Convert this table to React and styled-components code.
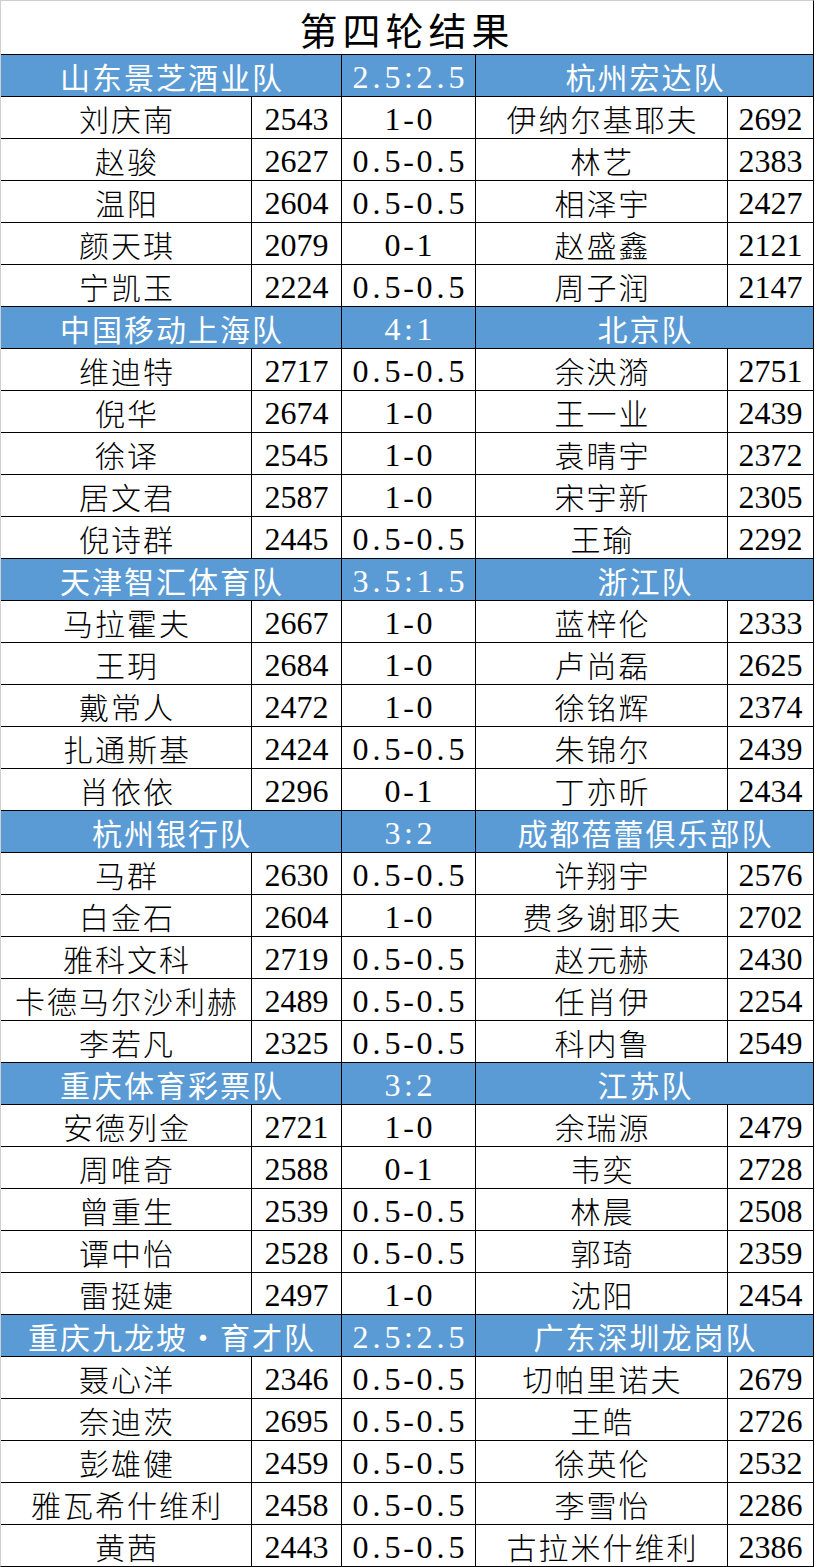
import React from "react";
import styled, { createGlobalStyle } from "styled-components";

const Global = createGlobalStyle`
  html, body { margin: 0; padding: 0; background: #fff; }
  body { font-family: "Liberation Serif", "Noto Sans CJK SC", serif; }
`;

const matches = [
  {
    home: "山东景芝酒业队", score: "2.5:2.5", away: "杭州宏达队",
    rows: [
      ["刘庆南", "2543", "1-0", "伊纳尔基耶夫", "2692"],
      ["赵骏", "2627", "0.5-0.5", "林艺", "2383"],
      ["温阳", "2604", "0.5-0.5", "相泽宇", "2427"],
      ["颜天琪", "2079", "0-1", "赵盛鑫", "2121"],
      ["宁凯玉", "2224", "0.5-0.5", "周子润", "2147"],
    ],
  },
  {
    home: "中国移动上海队", score: "4:1", away: "北京队",
    rows: [
      ["维迪特", "2717", "0.5-0.5", "余泱漪", "2751"],
      ["倪华", "2674", "1-0", "王一业", "2439"],
      ["徐译", "2545", "1-0", "袁晴宇", "2372"],
      ["居文君", "2587", "1-0", "宋宇新", "2305"],
      ["倪诗群", "2445", "0.5-0.5", "王瑜", "2292"],
    ],
  },
  {
    home: "天津智汇体育队", score: "3.5:1.5", away: "浙江队",
    rows: [
      ["马拉霍夫", "2667", "1-0", "蓝梓伦", "2333"],
      ["王玥", "2684", "1-0", "卢尚磊", "2625"],
      ["戴常人", "2472", "1-0", "徐铭辉", "2374"],
      ["扎通斯基", "2424", "0.5-0.5", "朱锦尔", "2439"],
      ["肖依依", "2296", "0-1", "丁亦昕", "2434"],
    ],
  },
  {
    home: "杭州银行队", score: "3:2", away: "成都蓓蕾俱乐部队",
    rows: [
      ["马群", "2630", "0.5-0.5", "许翔宇", "2576"],
      ["白金石", "2604", "1-0", "费多谢耶夫", "2702"],
      ["雅科文科", "2719", "0.5-0.5", "赵元赫", "2430"],
      ["卡德马尔沙利赫", "2489", "0.5-0.5", "任肖伊", "2254"],
      ["李若凡", "2325", "0.5-0.5", "科内鲁", "2549"],
    ],
  },
  {
    home: "重庆体育彩票队", score: "3:2", away: "江苏队",
    rows: [
      ["安德列金", "2721", "1-0", "余瑞源", "2479"],
      ["周唯奇", "2588", "0-1", "韦奕", "2728"],
      ["曾重生", "2539", "0.5-0.5", "林晨", "2508"],
      ["谭中怡", "2528", "0.5-0.5", "郭琦", "2359"],
      ["雷挺婕", "2497", "1-0", "沈阳", "2454"],
    ],
  },
  {
    home: "重庆九龙坡•育才队", score: "2.5:2.5", away: "广东深圳龙岗队",
    rows: [
      ["聂心洋", "2346", "0.5-0.5", "切帕里诺夫", "2679"],
      ["奈迪茨", "2695", "0.5-0.5", "王皓", "2726"],
      ["彭雄健", "2459", "0.5-0.5", "徐英伦", "2532"],
      ["雅瓦希什维利", "2458", "0.5-0.5", "李雪怡", "2286"],
      ["黄茜", "2443", "0.5-0.5", "古拉米什维利", "2386"],
    ],
  },
];

const Table = styled.div`
  display: grid;
  grid-template-columns: 250px 89px 133px 251px 85px;
  grid-template-rows: 53px;
  grid-auto-rows: 41px;
  gap: 1px;
  width: max-content;
  background: #000;
  border-left: 1px solid #cfcfcf;
  border-top: 1px solid #cfcfcf;
  border-right: 1px solid #000;
  border-bottom: 1px solid #000;
`;

const Title = styled.div`
  grid-column: 1 / -1;
  background: #fff;
  display: flex;
  align-items: center;
  justify-content: center;
  font-family: "Noto Sans CJK SC", sans-serif;
  font-weight: 400;
  font-size: 38px;
  letter-spacing: 5px;
  line-height: normal;
  padding-top: 2px;
  color: #000;
`;

const Cell = styled.div`
  grid-column: ${(p) => p.$span || "auto"};
  background: ${(p) => (p.$head ? "#5b9bd5" : "#fff")};
  color: ${(p) => (p.$head ? "#fff" : "#000")};
  display: flex;
  align-items: center;
  justify-content: center;
  white-space: nowrap;
  min-width: 0;
`;

const Name = styled.span`
  font-family: "Noto Sans CJK SC", sans-serif;
  font-weight: ${(p) => (p.$head ? 400 : 300)};
  font-size: 30px;
  letter-spacing: 2px;
  margin-right: -2px;
  line-height: 41px;
  margin-top: 1px;
`;

const Num = styled.span`
  font-family: "Liberation Serif", serif;
  font-size: 32px;
  line-height: 41px;
  margin-top: 3px;
`;

const Glyph = styled.span`
  display: inline-block;
  width: 0.5em;
  text-align: center;
`;

const Score = ({ text }) => (
  <Num>
    {text.split("").map((c, i) => (
      <Glyph key={i}>{c}</Glyph>
    ))}
  </Num>
);

export default function App() {
  return (
    <>
      <Global />
      <Table>
        <Title>第四轮结果</Title>
        {matches.map((m, mi) => (
          <React.Fragment key={mi}>
            <Cell $head $span="1 / 3">
              <Name $head>{m.home}</Name>
            </Cell>
            <Cell $head>
              <Score text={m.score} />
            </Cell>
            <Cell $head $span="4 / 6">
              <Name $head>{m.away}</Name>
            </Cell>
            {m.rows.map((r, ri) => (
              <React.Fragment key={ri}>
                <Cell><Name>{r[0]}</Name></Cell>
                <Cell><Num>{r[1]}</Num></Cell>
                <Cell><Score text={r[2]} /></Cell>
                <Cell><Name>{r[3]}</Name></Cell>
                <Cell><Num>{r[4]}</Num></Cell>
              </React.Fragment>
            ))}
          </React.Fragment>
        ))}
      </Table>
    </>
  );
}
